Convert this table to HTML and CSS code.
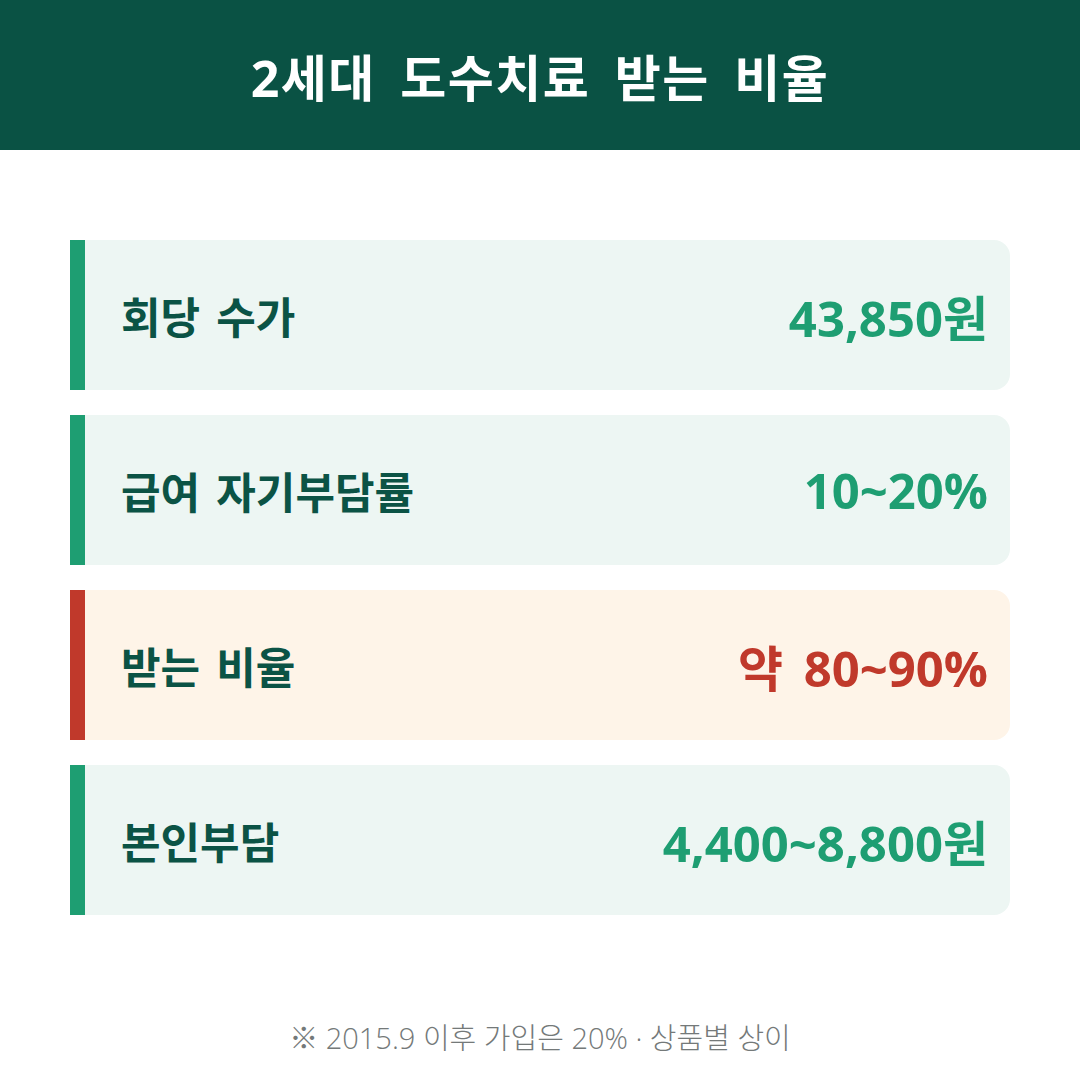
FILE: index.html
```html
<!DOCTYPE html>
<html lang="ko">
<head>
<meta charset="utf-8">
<link rel="stylesheet" href="styles.css">
</head>
<body>
<header class="header"><h1 class="title">2세대 도수치료 받는 비율</h1></header>
<main class="list">
  <div class="card"><span class="label">회당 수가</span><span class="value">43,850원</span></div>
  <div class="card"><span class="label">급여 자기부담률</span><span class="value">10~20%</span></div>
  <div class="card card-hl"><span class="label">받는 비율</span><span class="value">약 80~90%</span></div>
  <div class="card"><span class="label">본인부담</span><span class="value">4,400~8,800원</span></div>
</main>
<p class="note">※ 2015.9 이후 가입은 20% · 상품별 상이</p>
</body>
</html>
```
FILE: styles.css
```css
html, body { margin: 0; padding: 0; }
body {
  width: 1080px;
  height: 1080px;
  background: #ffffff;
  font-family: "Open Sans", "Noto Sans CJK KR", sans-serif;
  overflow: hidden;
}
.header {
  height: 150px;
  background: #0a5244;
  display: flex;
  align-items: center;
  justify-content: center;
}
.title {
  margin: 0;
  color: #ffffff;
  font-size: 50px;
  font-weight: 700;
  letter-spacing: 1.5px;
  word-spacing: 10px;
}
.list {
  padding: 90px 70px 0 70px;
  display: flex;
  flex-direction: column;
  gap: 25px;
}
.card {
  height: 150px;
  box-sizing: border-box;
  background: #edf6f3;
  border-left: 15px solid #1e9e72;
  border-radius: 0 16px 16px 0;
  display: flex;
  align-items: center;
  justify-content: space-between;
  padding: 0 22px 0 36px;
}
.card-hl {
  background: #fef4e8;
  border-left-color: #c0392b;
}
.label {
  color: #0b5345;
  font-size: 43px;
  font-weight: 700;
  word-spacing: 5px;
}
.value {
  color: #1e9e72;
  font-size: 49px;
  font-weight: 700;
  word-spacing: 8px;
}
.card-hl .value { color: #c0392b; }
.note {
  margin: 100px 0 0 0;
  text-align: center;
  color: #747979;
  font-size: 29px;
  font-weight: 300;
}
```
